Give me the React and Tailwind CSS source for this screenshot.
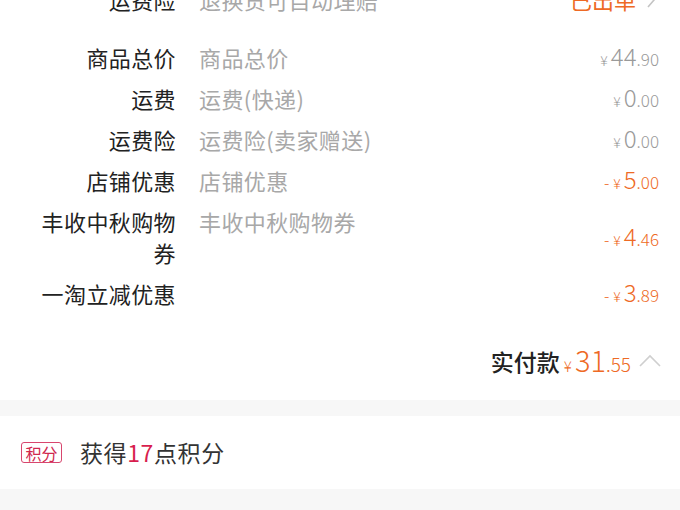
import React from "react";

const FONT = { fontFamily: '"Noto Sans CJK SC", "Noto Sans", sans-serif' };

function Price({ int, dec, minus, orange }) {
  const color = orange ? "text-[#ee6a25]" : "text-[#9a9a9a]";
  return (
    <div className={`flex items-baseline font-light ${color}`}>
      {minus && <span className="text-[16px] mr-[4px]">-</span>}
      <span className="text-[14px] mr-[3px]">¥</span>
      <span className="text-[24px] leading-none">{int}</span>
      <span className="text-[17px] leading-none">.{dec}</span>
    </div>
  );
}

function Row({ label, value, price }) {
  return (
    <div className="flex items-center py-[5px] pr-[21px]">
      <div className="w-[141px] ml-[35px] text-right text-[22px] tracking-[0.4px] leading-[31px] text-[#222] self-start break-all">
        {label}
      </div>
      <div className="flex-1 ml-[23px] text-[22px] tracking-[0.4px] leading-[31px] text-[#a8a8a8] self-start">
        {value}
      </div>
      {price}
    </div>
  );
}

function Chevron({ dir }) {
  return dir === "up" ? (
    <svg width="24" height="14" viewBox="0 0 24 14" fill="none">
      <path d="M2 12 L12 2 L22 12" stroke="#cfcfcf" strokeWidth="1.6" />
    </svg>
  ) : (
    <svg width="10" height="18" viewBox="0 0 10 18" fill="none">
      <path d="M2 2 L8 9 L2 16" stroke="#c4c4c4" strokeWidth="1.6" />
    </svg>
  );
}

export default function App() {
  return (
    <div className="w-[680px] h-[510px] overflow-hidden bg-white" style={FONT}>
      <div className="mt-[-21px]">
        <Row
          label="运费险"
          value="退换货可自动理赔"
          price={
            <div className="flex items-center gap-[10px] mr-[3px]">
              <span className="text-[22px] leading-[31px] text-[#ee6a25]">已出单</span>
              <Chevron dir="right" />
            </div>
          }
        />
      </div>
      <div className="mt-[17px]">
        <Row label="商品总价" value="商品总价" price={<Price int="44" dec="90" />} />
        <Row label="运费" value="运费(快递)" price={<Price int="0" dec="00" />} />
        <Row label="运费险" value="运费险(卖家赠送)" price={<Price int="0" dec="00" />} />
        <Row label="店铺优惠" value="店铺优惠" price={<Price int="5" dec="00" minus orange />} />
        <Row label="丰收中秋购物券" value="丰收中秋购物券" price={<Price int="4" dec="46" minus orange />} />
        <Row label="一淘立减优惠" value="" price={<Price int="3" dec="89" minus orange />} />
      </div>
      <div className="flex items-center justify-end h-[56px] mt-[19px] pr-[18px]">
        <span className="text-[23px] font-medium text-[#222] mr-[4px]">实付款</span>
        <div className="flex items-baseline font-light text-[#ee6a25] mr-[7px]">
          <span className="text-[15px] mr-[3px]">¥</span>
          <span className="text-[29px] leading-none">31</span>
          <span className="text-[19px] leading-none">.55</span>
        </div>
        <Chevron dir="up" />
      </div>
      <div className="h-[16px] mt-[11px] bg-[#f7f7f7]" />
      <div className="flex items-center h-[73px] pl-[21px]">
        <span className="flex items-center justify-center w-[41px] h-[21px] border border-[#d8466e] rounded-[3px] text-[16px] leading-none text-[#d0284f]">
          积分
        </span>
        <span className="ml-[18px] text-[23px] tracking-[0.6px] text-[#333]">
          获得<span className="text-[#d81e4e]">17</span>点积分
        </span>
      </div>
      <div className="h-[40px] bg-[#f7f7f7]" />
    </div>
  );
}
